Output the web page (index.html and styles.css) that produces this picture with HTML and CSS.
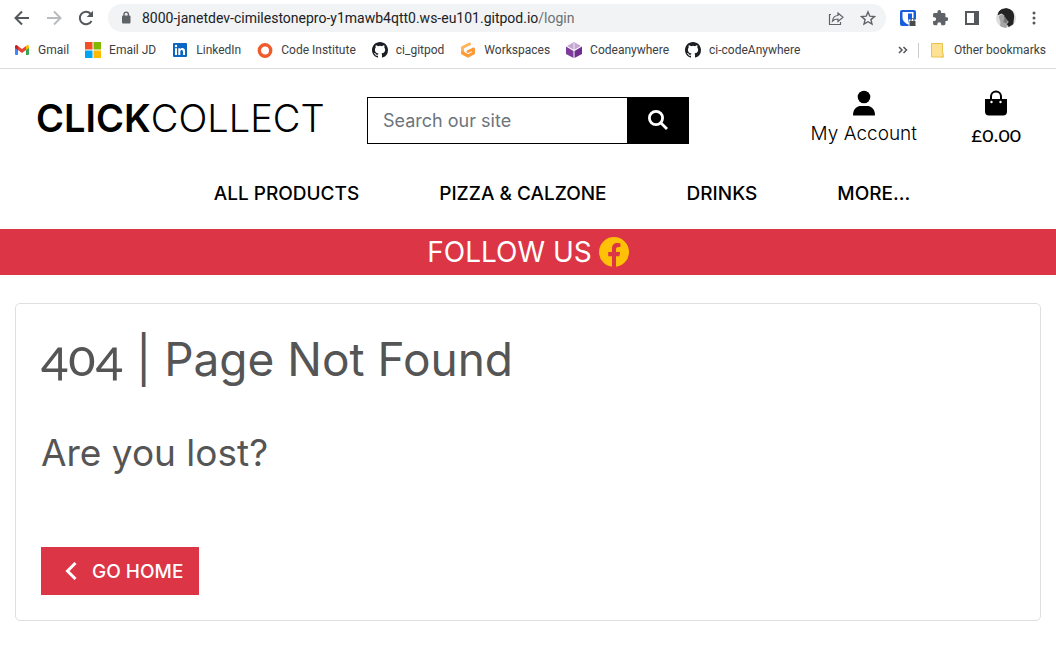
FILE: index.html
```html
<!DOCTYPE html>
<html lang="en">
<head>
<meta charset="utf-8">
<meta name="viewport" content="width=device-width, initial-scale=1">
<title>Click Collect</title>
<link rel="stylesheet" href="styles.css">
</head>
<body>
<svg class="defs" width="0" height="0" aria-hidden="true">
  <symbol id="github" viewBox="0 0 16 16"><path fill="#1b1f23" d="M8 0C3.58 0 0 3.58 0 8c0 3.54 2.29 6.53 5.47 7.59.4.07.55-.17.55-.38 0-.19-.01-.82-.01-1.49-2.01.37-2.53-.49-2.69-.94-.09-.23-.48-.94-.82-1.13-.28-.15-.68-.52-.01-.53.63-.01 1.08.58 1.23.82.72 1.21 1.87.87 2.33.66.07-.52.28-.87.51-1.07-1.78-.2-3.64-.89-3.64-3.95 0-.87.31-1.59.82-2.15-.08-.2-.36-1.02.08-2.12 0 0 .67-.21 2.2.82a7.6 7.6 0 0 1 4 0c1.53-1.04 2.2-.82 2.2-.82.44 1.1.16 1.92.08 2.12.51.56.82 1.27.82 2.15 0 3.07-1.87 3.75-3.65 3.95.29.25.54.73.54 1.48 0 1.07-.01 1.93-.01 2.2 0 .21.15.46.55.38A8.01 8.01 0 0 0 16 8c0-4.42-3.58-8-8-8z"/></symbol>
</svg>
<div class="browser">
  <div class="toolbar">
    <button class="tool" aria-label="Back"><svg width="16" height="16" viewBox="0 0 16 16" fill="none" stroke="#54575b" stroke-width="2"><path d="M15 8H2M8 1.5 1.5 8 8 14.500"/></svg></button>
    <button class="tool" aria-label="Forward"><svg width="16" height="16" viewBox="0 0 16 16" fill="none" stroke="#b9bbbe" stroke-width="2"><path d="M1 8h13M8 1.500 14.500 8 8 14.500"/></svg></button>
    <button class="tool" aria-label="Reload"><svg width="16" height="16" viewBox="0 0 16 16"><path d="M13.500 11A6.200 6.200 0 1 1 12.600 3.800" fill="none" stroke="#54575b" stroke-width="2"/><path d="M15 .7V7H8.700z" fill="#54575b"/></svg></button>
    <div class="address">
      <svg width="10" height="14" viewBox="0 0 10 14"><rect x="1" y="4.500" width="8.500" height="8" rx="1" fill="#5f6368"/><path d="M3 5V3.300a2.200 2.200 0 0 1 4.400 0V5" fill="none" stroke="#5f6368" stroke-width="1.400"/></svg>
      <span class="url">8000-janetdev-cimilestonepro-y1mawb4qtt0.ws-eu101.gitpod.io<span class="path">/login</span></span>
      <button class="tool" aria-label="Share"><svg width="16" height="16" viewBox="0 0 16 16" fill="none" stroke="#5f6368" stroke-width="1.200"><path d="M3 4.500H1.500v10h11V12"/><path d="M4.500 11C5 7.500 7 5.500 10 5.500V3l5 4.300-5 4.200V9C7.500 9 6 9.500 4.500 11z"/></svg></button>
      <button class="tool" aria-label="Bookmark this page"><svg width="16" height="16" viewBox="0 0 16 16" fill="none" stroke="#5f6368" stroke-width="1.400"><path d="m8 1.900 1.800 4.300 4.600.4-3.500 3 1.100 4.500L8 11.700l-4 2.400 1.100-4.500-3.500-3 4.600-.4z"/></svg></button>
    </div>
    <button class="tool" aria-label="Password manager"><svg width="16" height="16" viewBox="0 0 16 16"><rect width="16" height="16" rx="2" fill="#175ddc"/><path d="M2.500 2h11v6c0 3-2.500 5-5.500 6.500C5 13 2.500 11 2.500 8z" fill="#fff"/><path d="M8 3.500h4V8c0 2-1.500 3.500-4 4.800z" fill="#175ddc"/><path d="M8.500 9.500H16V16H8.500z" fill="#fff"/><rect x="9.500" y="11" width="6" height="5" fill="#4a4a4a"/><path d="M11 11v-1a1.500 1.500 0 0 1 3 0v1" fill="none" stroke="#4a4a4a"/></svg></button>
    <button class="tool" aria-label="Extensions"><svg width="16" height="16" viewBox="1 1 21 22"><path fill="#5f6368" d="M20.500 11H19V7a2 2 0 0 0-2-2h-4V3.500a2.500 2.500 0 0 0-5 0V5H4a2 2 0 0 0-2 2v3.800h1.500a2.700 2.700 0 0 1 0 5.400H2V20c0 1.100.9 2 2 2h3.800v-1.500a2.700 2.700 0 0 1 5.400 0V22H17a2 2 0 0 0 2-2v-4h1.500a2.500 2.500 0 0 0 0-5z"/></svg></button>
    <button class="tool" aria-label="Side panel"><svg width="16" height="16" viewBox="0 0 16 16"><path d="M2 2h12v12H2z" fill="#fff" stroke="#54575b" stroke-width="2"/><path d="M10 2h4v12h-4z" fill="#54575b"/></svg></button>
    <button class="tool" aria-label="Profile"><svg width="20" height="20" viewBox="0 0 22 22"><clipPath id="face"><circle cx="11" cy="11" r="11"/></clipPath><g clip-path="url(#face)"><path fill="#dcdcdc" d="M0 0h22v22H0z"/><path fill="#a5a5a5" d="M3 9q4-4 8 1l3 6-3 6H4l1-6z"/><path fill="#242424" d="M2 7Q3 0 12 0q8 2 8 9l-1 9-5 3-2-3 2-3-4-3-1-4-3-2-4 2z"/><path fill="#777" d="m10 10 3 4-2 3-3-2z"/></g></svg></button>
    <button class="tool menu" aria-label="Menu"><svg width="4" height="16" viewBox="0 0 4 16" fill="#54575b"><circle cx="2" cy="3" r="1.500"/><circle cx="2" cy="8" r="1.500"/><circle cx="2" cy="13" r="1.500"/></svg></button>
  </div>
  <nav class="bookmarks" aria-label="Bookmarks">
    <a href="#"><svg width="16" height="16" viewBox="0 0 16 16"><path fill="#4285f4" d="M1 4h3v9H2q-1 0-1-1z"/><path fill="#34a853" d="M12 4h3v8q0 1-1 1h-2z"/><path fill="#ea4335" d="m4 4 4 3 4-3v4l-4 3-4-3z"/><path fill="#c5221f" d="M1 4q1-2 3 0v4L1 6z"/><path fill="#fbbc04" d="M15 4q-1-2-3 0v4l3-2z"/></svg>Gmail</a>
    <a href="#"><svg width="16" height="16" viewBox="0 0 16 16"><path fill="#f25022" d="M0 0h7.500v7.500H0z"/><path fill="#7fba00" d="M8.500 0H16v7.500H8.500z"/><path fill="#00a4ef" d="M0 8.500h7.500V16H0z"/><path fill="#ffb900" d="M8.500 8.500H16V16H8.500z"/></svg>Email JD</a>
    <a href="#"><svg width="16" height="16" viewBox="0 0 16 16"><rect x="1" y="1" width="14" height="14" rx="1" fill="#0a66c2"/><path fill="#fff" d="M3 6.200h2V13H3zM6.300 6.200h2v1c1-1.700 4.700-1.600 4.700 1.600V13h-2V9.500c0-2.300-2.700-2-2.700 0V13h-2z"/><circle cx="4" cy="4" r="1.200" fill="#fff"/></svg>LinkedIn</a>
    <a href="#"><svg width="16" height="16" viewBox="0 0 16 16"><circle cx="8" cy="8.500" r="5.700" fill="none" stroke="#f15a2b" stroke-width="3.400"/></svg>Code Institute</a>
    <a href="#"><svg width="16" height="16"><use href="#github"/></svg>ci_gitpod</a>
    <a href="#"><svg width="16" height="16" viewBox="0 0 16 16" fill="none" stroke-width="3" stroke-linecap="round" stroke-linejoin="round"><path stroke="#ffb45b" d="M9.500 2 2.500 5.500v5.800L8 14l5.500-3V7"/><path stroke="#ff9a3a" d="M2.500 10.500 8 14l5.500-3V7L8 9.500"/></svg>Workspaces</a>
    <a href="#"><svg width="16" height="16" viewBox="0 0 16 16"><path fill="#c5a5d2" d="m8 0 7 4-7 4-7-4z"/><path fill="#7d3c98" d="M0 4.500 7.500 9v7L0 12z"/><path fill="#6f2f8c" d="M16 4.500 8.500 9v7l7.500-4z"/><path d="M8 1v7" stroke="#eee"/></svg>Codeanywhere</a>
    <a href="#"><svg width="16" height="16"><use href="#github"/></svg>ci-codeAnywhere</a>
    <button class="more" aria-label="More bookmarks"><svg width="10" height="8" viewBox="0 0 10 8" fill="none" stroke="#54575b" stroke-width="1.500"><path d="m1 1 3 3-3 3M5.500 1l3 3-3 3"/></svg></button>
    <a class="other" href="#"><svg width="13" height="15" viewBox="0 0 13 15"><path d="M.5.5h11v10l1 3.500H.5z" fill="#fde293" stroke="#e8c44c"/><path d="M12 9.500V14H9.500" fill="#fde293" stroke="#e8c44c"/></svg>Other bookmarks</a>
  </nav>
</div>
<header>
  <div class="top">
    <a class="logo" href="#"><strong>CLICK</strong>COLLECT</a>
    <form class="search">
      <input type="search" placeholder="Search our site" aria-label="Search our site">
      <button type="button" aria-label="Search"><svg width="20" height="20" viewBox="0 0 20 20" fill="none" stroke="#fff" stroke-width="2.800"><circle cx="8" cy="8" r="6.600"/><path d="m12.700 12.700 6.300 6.300"/></svg></button>
    </form>
    <div class="account">
      <a href="#"><svg width="24" height="26" viewBox="0 0 24 26"><circle cx="12" cy="7" r="6.300"/><path d="M1 25.500C1 18.500 5 16 9 16h6c4 0 8 2.500 8 9.500z"/></svg>My Account</a>
      <a href="#"><svg width="24" height="26" viewBox="0 0 24 26"><path d="M1 9h22v12.500q0 4-4 4H5q-4 0-4-4z"/><path d="M7 11V6.500a5 5 0 0 1 10 0V11" fill="none" stroke="#000" stroke-width="2"/><circle cx="7.500" cy="12" r="1.200" fill="#fff"/><circle cx="16.500" cy="12" r="1.200" fill="#fff"/></svg><span class="figures">£0.00</span></a>
    </div>
  </div>
  <nav class="main-nav" aria-label="Main">
    <a href="#">ALL PRODUCTS</a><a href="#">PIZZA &amp; CALZONE</a><a href="#">DRINKS</a><a href="#">MORE...</a>
  </nav>
</header>
<div class="banner">FOLLOW US <a href="#" aria-label="Facebook"><svg width="30" height="30" viewBox="0 0 30 30"><circle cx="15" cy="15" r="15" fill="#ffc107"/><path fill="#dc3545" d="M13 30V19.300H9.200V15H13v-3.300C13 8 15 6 18.500 6q1.500 0 2.900.3v3.600h-1.900c-1.900 0-2.500 1.100-2.500 2.400V15h4.100l-.7 4.300H17V30z"/></svg></a></div>
<main>
  <section class="card">
    <h1><span class="figures">404</span> | Page Not Found</h1>
    <h2>Are you lost?</h2>
    <a class="home" href="#"><svg width="12" height="18" viewBox="0 0 12 18" fill="none" stroke="#fff" stroke-width="3"><path d="M10.500 1 2.500 9l8 8"/></svg>GO HOME</a>
  </section>
</main>
</body>
</html>
```
FILE: styles.css
```css
* { box-sizing: border-box; }
body { margin: 0; background: #fff; color: #000; font-family: Inter, "Liberation Sans", sans-serif; font-size: 19px; }
a { color: inherit; text-decoration: none; }
button { border: 0; padding: 0; background: none; cursor: pointer; }
svg { display: block; flex: none; }
.defs { position: absolute; }
.figures { font-family: Lato, sans-serif; font-size: 1.1em; font-weight: 400; font-variant-numeric: oldstyle-nums; }

.browser { height: 69px; border-bottom: 1px solid #dadce0; font-family: Roboto, "Open Sans", sans-serif; }
.toolbar { display: flex; align-items: center; gap: 16px; padding: 4px 20px 0 14px; }
.tool { display: flex; }
.address { display: flex; flex: 1; align-items: center; gap: 16px; height: 28px; margin-right: -2px; margin-left: -2px; padding: 0 10px 0 13px; border-radius: 14px; background: #f1f3f4; }
.url { flex: 1; margin-left: -5px; color: #202124; font-size: 14px; white-space: nowrap; }
.path { color: #6b6f74; }
.bookmarks { display: flex; align-items: center; gap: 16px; height: 36px; padding: 0 10px 0 14px; color: #3c4043; font-size: 12px; white-space: nowrap; }
.bookmarks a { display: flex; align-items: center; gap: 8px; }
.more { margin-left: auto; margin-right: -6px; }
.bookmarks .other { gap: 10px; padding-left: 12px; border-left: 1px solid #c9cbce; }

.top { display: grid; grid-template-columns: repeat(3, minmax(0, 1fr)); align-items: center; padding-top: 21px; }
.logo { padding-left: 36px; font-size: 38px; font-weight: 300; }
.logo strong { font-weight: 600; }
.search { display: flex; height: 47px; margin: 4px 15px 0; border: 1px solid #000; }
.search input { flex: 1; min-width: 0; padding: 0 15px; border: 0; background: #fff; font: inherit; font-size: 18px; }
.search input::placeholder { color: #6c757d; opacity: 1; }
.search button { display: flex; align-items: center; justify-content: center; width: 61px; background: #000; }
.account { display: flex; justify-content: flex-end; gap: 54px; padding-right: 35px; font-weight: 300; line-height: 24px; }
.account a { display: flex; flex-direction: column; align-items: center; gap: 6px; }
.main-nav { display: flex; justify-content: center; gap: 80px; padding: 36px 0 23px 68px; font-size: 19px; font-weight: 500; line-height: 24px; white-space: nowrap; }

.banner { display: flex; align-items: center; justify-content: center; gap: 7px; height: 46px; background: #dc3545; color: #fff; font-size: 28px; }
main { padding: 28px 15px; }
.card { padding: 25px; border: 1px solid #dfdfdf; border-radius: 5px; color: #555; }
h1, h2 { margin: 0; font-weight: 400; }
h1 { font-size: 46px; line-height: 60px; }
h1 .figures { line-height: 1; }
h2 { margin-top: 36px; font-size: 37px; line-height: 56px; }
.home { display: inline-flex; align-items: center; gap: 15px; height: 48px; margin-top: 66px; padding: 0 16px 0 24px; background: #dc3545; color: #fff; font-size: 19px; font-weight: 500; }
```
